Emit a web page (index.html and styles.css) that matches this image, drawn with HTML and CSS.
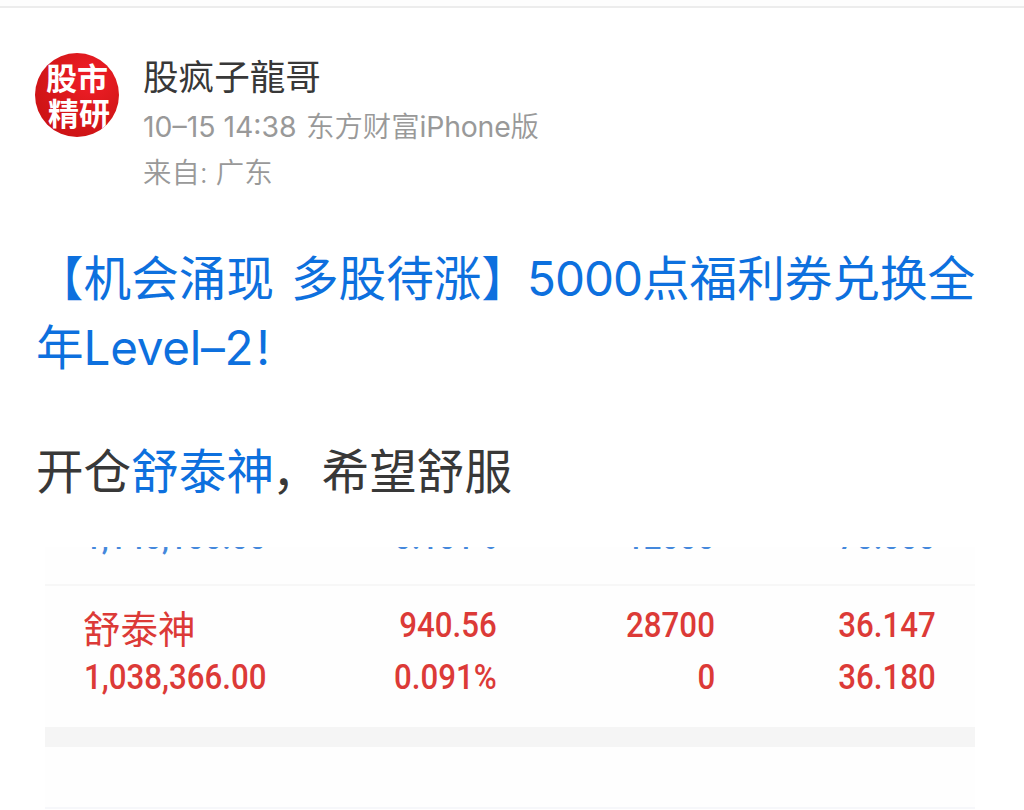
FILE: index.html
```html
<!DOCTYPE html>
<html lang="zh-CN">
<head>
<meta charset="utf-8">
<title>股疯子龍哥</title>
<link rel="stylesheet" href="styles.css">
</head>
<body>
<main class="post">
  <header class="author">
    <div class="avatar"><span>股市</span><span class="second">精研</span></div>
    <div class="meta">
      <div class="name">股疯子龍哥</div>
      <div class="info"><span class="date">10–15 14:38</span><span>东方财富<span class="device">iPhone</span>版</span></div>
      <div class="info">来自: 广东</div>
    </div>
  </header>
  <h1 class="title">
    <span class="line"><span>【机会涌现</span><span class="group">多股待涨】</span><span class="points">5000</span><span>点福利券兑换全</span></span>
    <span class="line"><span>年</span><span class="level">Level–2<span class="mark">!</span></span></span>
  </h1>
  <p class="content">开仓<a class="link">舒泰神</a><span class="comma">，</span>希望舒服</p>
  <section class="holdings">
    <div class="clip"><div class="row"><span class="num first">1,140,100.00</span><span class="num">0.101%</span><span class="num">12000</span><span class="num">70.000</span></div></div>
    <div class="stock-rows">
      <div class="row"><span class="stock">舒泰神</span><span class="num">940.56</span><span class="num">28700</span><span class="num">36.147</span></div>
      <div class="row"><span class="num first">1,038,366.00</span><span class="num">0.091%</span><span class="num">0</span><span class="num">36.180</span></div>
    </div>
    <div class="band"></div>
  </section>
</main>
</body>
</html>
```
FILE: styles.css
```css
body {
  margin: 0;
  background: #fff;
  font-family: Inter, "Noto Sans CJK SC", sans-serif;
  color: #383838;
}
.post {
  box-sizing: border-box;
  width: 1024px;
  height: 810px;
  overflow: hidden;
  padding: 0 0 0 36px;
}
.post::before {
  content: "";
  display: block;
  height: 2px;
  margin: 0 0 0 -36px;
  border-top: 6px solid #fdfdfd;
  background: #ececec;
}
.author {
  display: flex;
  gap: 24px;
  height: 236px;
  margin-left: -1px;
}
.avatar {
  display: flex;
  flex-direction: column;
  box-sizing: border-box;
  width: 84px;
  height: 84px;
  margin-top: 45px;
  padding: 8px 0 0 11px;
  border-radius: 50%;
  overflow: hidden;
  background: radial-gradient(circle at 65% 30%, #ea1c24 0 15%, #d8181b 45%, #c60f11 100%);
  color: #fff;
  font-size: 31px;
  font-weight: 700;
  line-height: 35px;
  white-space: nowrap;
}
.second { padding-left: 2px; }
.meta { padding-top: 50px; white-space: nowrap; }
.name { height: 46px; font-size: 35.6px; line-height: 40px; }
.info {
  display: flex;
  font-size: 28.4px;
  line-height: 46px;
  font-weight: 350;
  color: #999;
}
.date { width: 163px; font-weight: 400; }
.device { font-weight: 400; letter-spacing: -.2px; }
.title {
  margin: 0;
  font-size: 47.6px;
  font-weight: 400;
  line-height: 69px;
  color: #0d70de;
  white-space: nowrap;
}
.line { display: flex; }
.group { margin-left: 17px; }
.points { width: 115px; margin-left: -2px; letter-spacing: -1px; }
.level { letter-spacing: -.3px; }
.mark { margin-left: 3px; }
.content { margin: 55px 0 41px; font-size: 47.6px; line-height: 69px; white-space: nowrap; }
.comma { margin: 0 2px 0 -2px; }
.link { color: #0d70de; }
.holdings {
  box-sizing: border-box;
  width: 930px;
  height: 262px;
  margin-left: 9px;
  background: #fefefe;
  border-bottom: 2px solid #f6f7fa;
  font-family: Roboto, "Noto Sans CJK SC", sans-serif;
  color: #dc3a37;
}
.clip {
  height: 37px;
  overflow: hidden;
  border-bottom: 2px solid #f7f7f7;
  color: #4488dc;
}
.clip .row { margin-top: -35px; transform: translateY(-1px); }
.row {
  display: grid;
  grid-template-columns: 222px 230px 218px 221px;
  height: 52px;
  line-height: 52px;
  white-space: nowrap;
}
.num {
  justify-self: end;
  transform: scaleX(.88);
  transform-origin: right center;
  font-size: 35.5px;
  font-weight: 500;
}
.first { justify-self: start; margin-left: 39px; transform-origin: left center; }
.stock { margin-left: 38px; padding-top: 5px; font-size: 37.5px; line-height: 52px; }
.stock-rows { height: 128px; padding-top: 13px; }
.band { height: 20px; background: #f5f5f5; }
```
